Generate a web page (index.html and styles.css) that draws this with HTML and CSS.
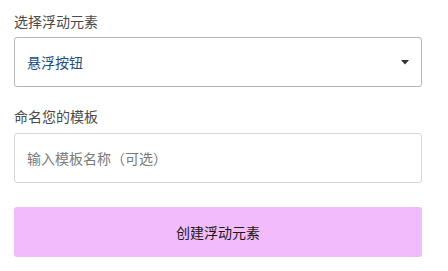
FILE: index.html
```html
<!DOCTYPE html>
<html lang="zh">
<head>
<meta charset="utf-8">
<link rel="stylesheet" href="styles.css">
</head>
<body>
<div class="form">
  <div class="field">
    <label class="label">选择浮动元素</label>
    <div class="select">
      <span class="select-value">悬浮按钮</span>
      <svg class="caret" width="8" height="5" viewBox="0 0 8 5"><path d="M0 0h8L4 4.5z" fill="#333"/></svg>
    </div>
  </div>
  <div class="field field-name">
    <label class="label">命名您的模板</label>
    <div class="input"><span class="placeholder">输入模板名称（可选）</span></div>
  </div>
  <button class="btn">创建浮动元素</button>
</div>
</body>
</html>
```
FILE: styles.css
```css
html, body {
  margin: 0;
  padding: 0;
  background: #fff;
}
body {
  font-family: "Noto Sans CJK SC", "Noto Sans", sans-serif;
  font-size: 14px;
}
.form {
  padding: 11px 26px 0 14px;
  display: flex;
  flex-direction: column;
}
.field {
  display: flex;
  flex-direction: column;
  gap: 6px;
  margin-bottom: 20px;
}
.field-name {
  gap: 7px;
}
.field-name .label {
  margin-top: -1px;
}
.label {
  color: #4a4a4a;
  line-height: 20px;
  height: 20px;
}
.select, .input {
  box-sizing: border-box;
  height: 50px;
  border: 1px solid #c3c3c3;
  border-radius: 3px;
  display: flex;
  align-items: center;
  padding: 0 12px;
}
.select {
  border-color: #b5b5b5;
  justify-content: space-between;
  padding-right: 12px;
}
.input {
  border-color: #d6d6d6;
}
.select-value {
  color: #1e4f7d;
}
.caret {
  display: block;
  margin-top: 1px;
}
.placeholder {
  color: #7a7a7a;
}
.btn {
  margin-top: 4px;
  height: 50px;
  border: none;
  border-radius: 3px;
  background: #f2bbfb;
  color: #1a1a1a;
  font-family: inherit;
  font-size: 14px;
  padding: 0;
}
```
